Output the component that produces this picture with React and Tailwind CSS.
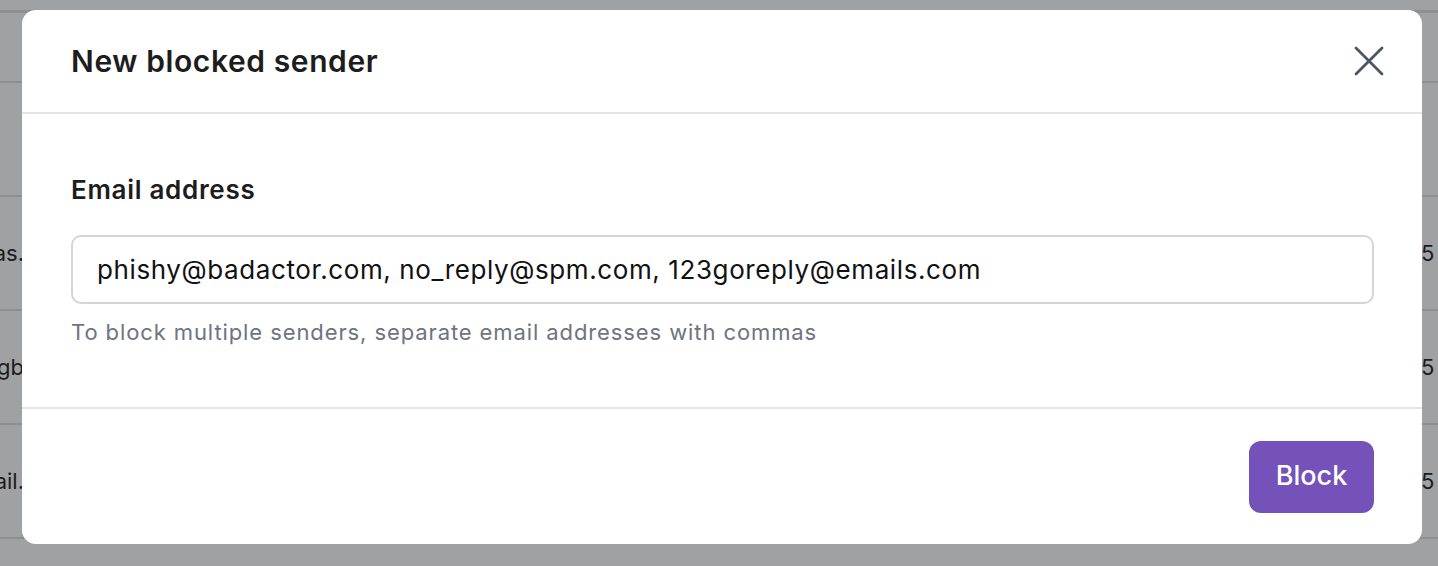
import React, { useState } from 'react';

// rows of the table that sits behind the dialog overlay
const rows = [
  { left: '', right: '' },
  { left: 'jonas.', right: '5' },
  { left: 'mgb', right: '5' },
  { left: 'gmail.', right: '5' },
  { left: '', right: '' },
];

const CloseIcon = () => (
  <svg width="30" height="30" viewBox="0 0 30 30" fill="none" stroke="#4b5563" strokeWidth="2.8" strokeLinecap="round">
    <path d="M2 2L28 28M28 2L2 28" />
  </svg>
);

const App = () => {
  const [emails, setEmails] = useState('phishy@badactor.com, no_reply@spm.com, 123goreply@emails.com');

  return (
    <div className="relative w-full h-[566px] overflow-hidden bg-[#a0a1a3]" style={{ fontFamily: 'Inter, "Noto Sans", sans-serif' }}>
      {/* Table behind */}
      <div className="flex flex-col pt-[10px]">
        <div className="h-[3px] bg-[#8e8f91]" />
        <div className="h-[70px] border-b-[2px] border-[#8e8f91]" />
        {rows.map((r, i) => (
          <div key={i} className="h-[114px] shrink-0 border-b-[2px] border-[#8e8f91] flex items-center justify-between text-[22px] text-[#1c1c1e]">
            <div className="w-[24px] overflow-hidden flex justify-end whitespace-nowrap">{r.left}</div>
            <div className="w-[17px] overflow-hidden whitespace-nowrap">{r.right}</div>
          </div>
        ))}
      </div>

      {/* Dialog */}
      <div className="absolute top-[10px] left-[22px] w-[1400px] h-[534px] bg-white rounded-[14px] flex flex-col">
        <div className="h-[104px] shrink-0 flex items-center justify-between pl-[49px] pr-[38px] border-b-[2px] border-[#e4e4e9]">
          <h2 className="text-[30px] font-semibold text-[#1d1d20] tracking-[0.6px]">New blocked sender</h2>
          <button className="w-[30px] h-[30px] flex items-center justify-center">
            <CloseIcon />
          </button>
        </div>

        <div className="flex-1 pl-[49px] pr-[48px] pt-[60px]">
          <label className="block text-[26px] leading-[32px] font-semibold text-[#1d1d20] tracking-[0.7px]">Email address</label>
          <input
            value={emails}
            onChange={(e) => setEmails(e.target.value)}
            className="mt-[29px] w-full h-[69px] rounded-[10px] border-[2px] border-[#d4d5d9] px-[24px] text-[26px] tracking-[0.6px] text-[#111113] outline-none"
          />
          <p className="mt-[14px] text-[22px] leading-[28px] text-[#6e7480] tracking-[0.9px]">To block multiple senders, separate email addresses with commas</p>
        </div>

        <div className="h-[137px] shrink-0 border-t-[2px] border-[#e4e4e9] flex items-center justify-end pr-[48px]">
          <button className="w-[125px] h-[72px] rounded-[12px] bg-[#7452b9] text-white text-[27px] font-medium">Block</button>
        </div>
      </div>
    </div>
  );
};

export default App;
